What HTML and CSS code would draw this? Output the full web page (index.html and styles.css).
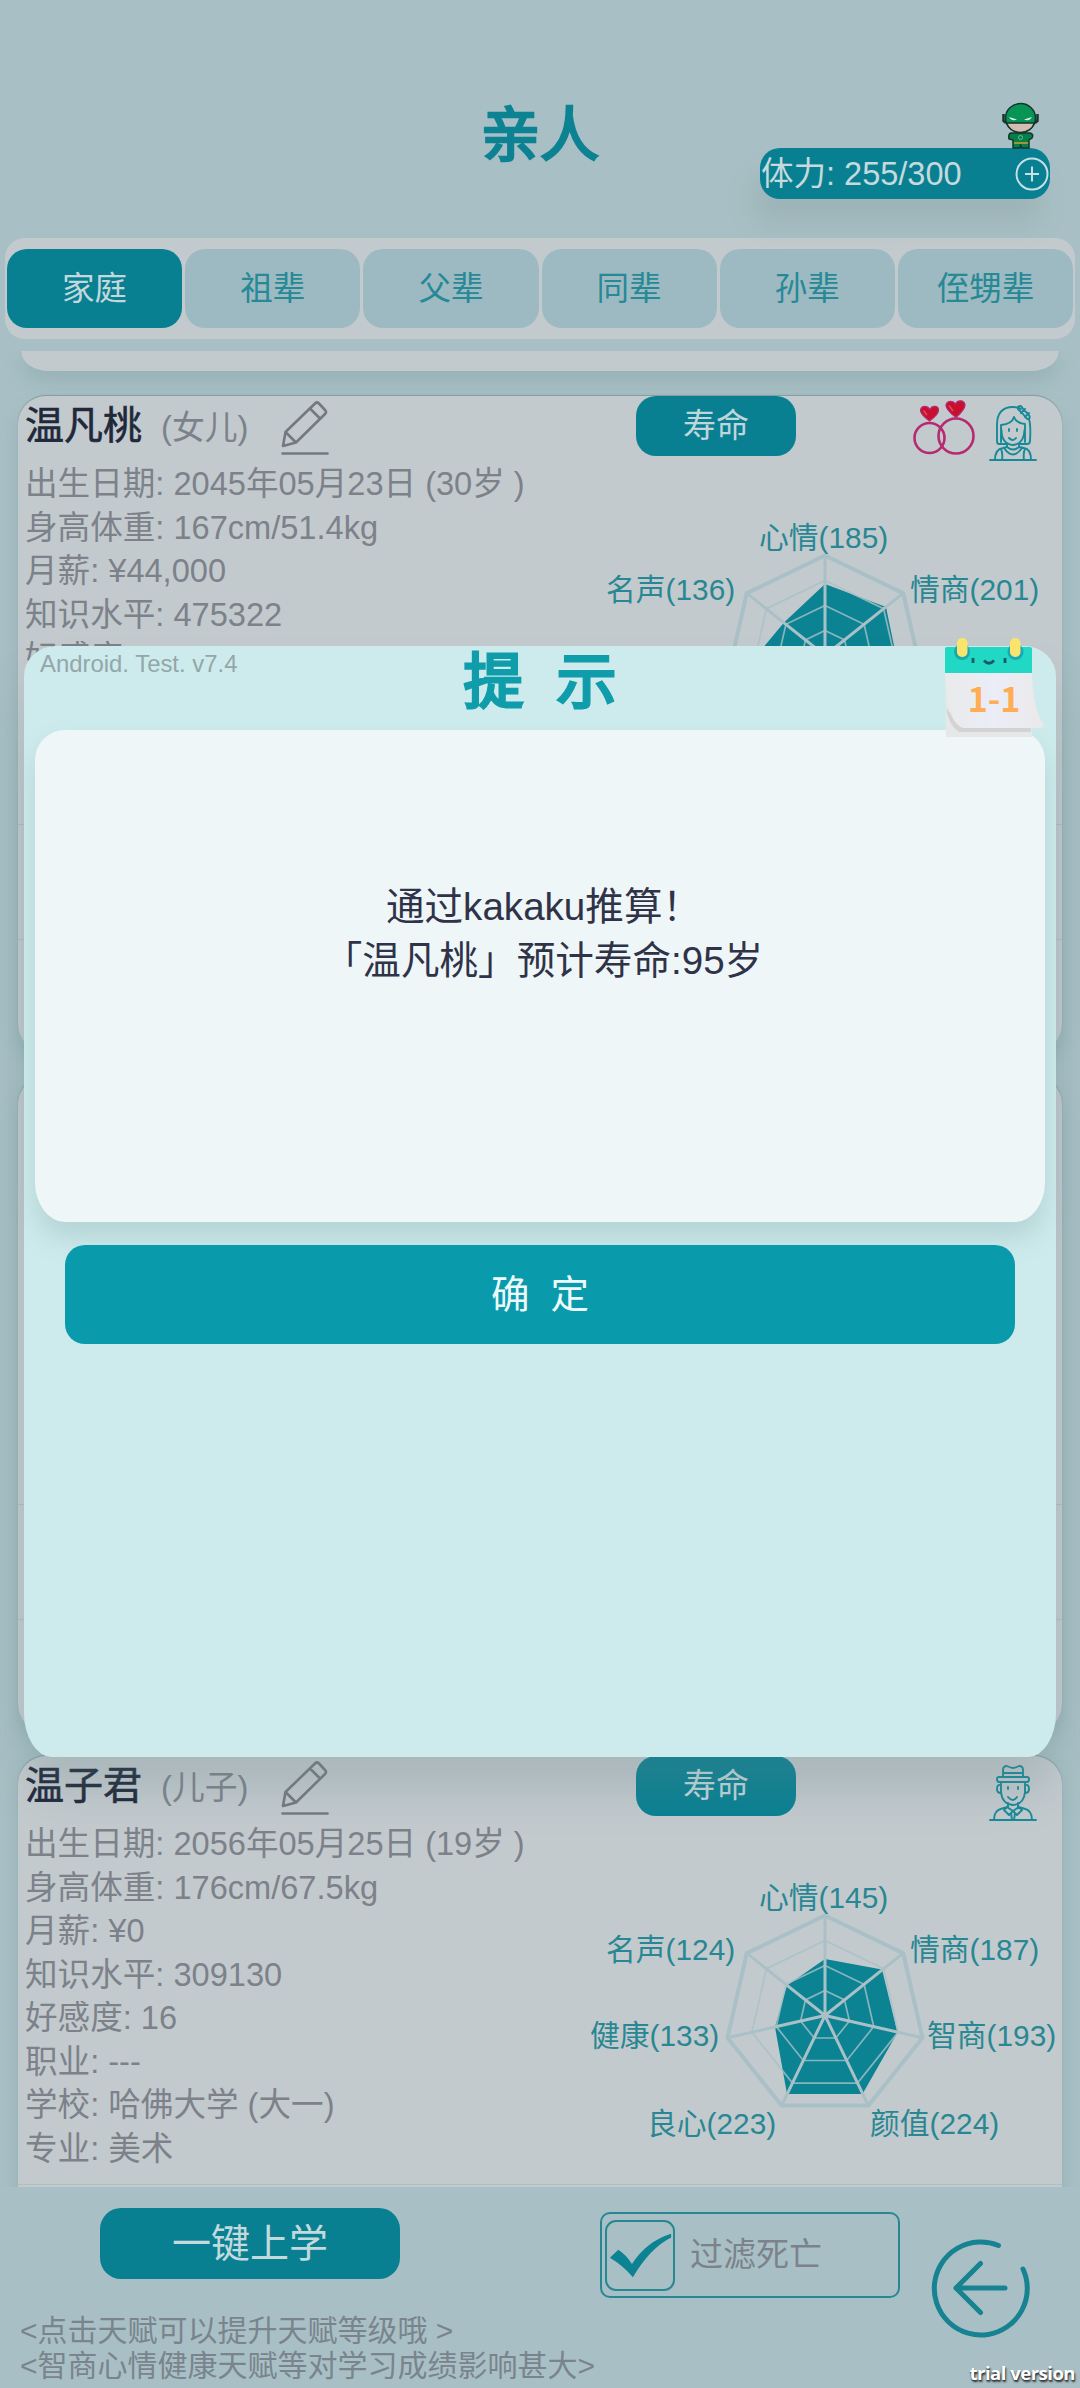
FILE: index.html
```html
<!DOCTYPE html>
<html lang="zh-CN">
<head>
<meta charset="utf-8">
<title>亲人</title>
<link rel="stylesheet" href="styles.css">
</head>
<body>
<svg class="defs" width="0" height="0">
  <defs>
    <symbol id="pencil" viewBox="0 0 48 56">
      <path d="M2 46 4.5 32 34 3.5Q36 1.500 38 3.500L44 10Q46 12 44 14L15 42.500Z M4.500 32 15 42.500 M29 8.500 39.500 19" fill="none" stroke="currentColor" stroke-width="2.600" stroke-linejoin="round"/>
      <path d="M1.500 53.500H46.500" stroke="currentColor" stroke-width="2.600" stroke-linecap="round"/>
    </symbol>
    <symbol id="web" viewBox="-110 -110 220 220">
      <g fill="none" stroke="#a8c0c6">
        <path stroke-width="4" d="M0-100 78.200-62.300 97.500 22.300 43.400 90.100-43.400 90.100-97.500 22.300-78.200-62.300Z"/>
        <path stroke-width="1.700" d="M0-75 58.600-46.800 73.100 16.700 32.500 67.600-32.500 67.600-73.100 16.700-58.600-46.800Z M0-50 39.100-31.200 48.700 11.100 21.700 45-21.700 45-48.700 11.100-39.100-31.200Z M0-25 19.500-15.600 24.400 5.600 10.800 22.500-10.800 22.500-24.400 5.600-19.500-15.600Z" opacity=".8"/>
        <path stroke-width="3" d="M0 0V-100M0 0 78.200-62.300M0 0 97.500 22.300M0 0 43.400 90.100M0 0-43.400 90.100M0 0-97.500 22.300M0 0-78.200-62.300"/>
      </g>
    </symbol>
  </defs>
</svg>
<main class="screen">
  <header class="header">
    <h1 class="title">亲人</h1>
    <div class="energy">
      <span>体力: 255/300</span>
      <svg class="plus" viewBox="0 0 34 34"><circle cx="17" cy="17" r="15.500"/><path d="M17 9.500V24.500M10 17H24"/></svg>
      <svg class="mascot" viewBox="0 0 37 47">
        <path d="M9 31Q6 32 7 37L11 38V46H18L18.500 43 20 46H27V38L30 36Q32 32 28 31Z" fill="#06804a" stroke="#16352b" stroke-width="1.500"/>
        <path d="M12 41H26" stroke="#b09a35" stroke-width="1.800"/>
        <circle cx="18.500" cy="35.500" r="2" fill="none" stroke="#6cba99"/>
        <path d="M1.500 12V19L4 21M35.500 12V19L33 21" fill="none" stroke="#16352b" stroke-width="2.500"/>
        <ellipse cx="18.500" cy="16" rx="15" ry="14.500" fill="#079455" stroke="#16352b" stroke-width="1.500"/>
        <path d="M4.500 21H32.500Q29 30 18.500 30.500 8 30 4.500 21Z" fill="#d2bdb3" stroke="#16352b" stroke-width="1.500"/>
        <path d="M7 15 15 17.500Q10 20 7 15ZM30 15 22 17.500Q27 20 30 15Z" fill="#e0eee5"/>
      </svg>
    </div>
  </header>

  <nav class="tabs">
    <a class="tab active">家庭</a>
    <a class="tab">祖辈</a>
    <a class="tab">父辈</a>
    <a class="tab">同辈</a>
    <a class="tab">孙辈</a>
    <a class="tab">侄甥辈</a>
  </nav>

  <section class="list">
    <article class="card tail"></article>

    <article class="card">
      <div class="main">
        <div class="head">
          <b class="name">温凡桃</b><span class="relation">(女儿)</span>
          <svg class="pencil"><use href="#pencil"/></svg>
          <button class="life">寿命</button>
          <svg class="rings" viewBox="0 0 62 56">
            <g fill="none" stroke="#b52a70" stroke-width="2.600"><circle cx="16.500" cy="38" r="15"/><circle cx="43" cy="36" r="17.500"/></g>
            <g fill="#c8102e" stroke="#b52a70" stroke-width="1.200">
              <path d="M16.500 21C10 16 7 13 7.500 10 8.500 5 14.500 5.500 17 9.500 19 5 25.500 5.500 25.500 10 25.500 14 22 17 16.500 21Z"/>
              <path d="M43 17.500C36 12 32.500 8 33 5 34 .5 40 0 42.500 4 44.500-.5 51 0 52 4.500 52.500 8.500 48 13 43 17.500Z"/>
            </g>
            <path d="M10.500 10.500 14 15M36 5.500 40 11" stroke="#dc4b61" stroke-width="1.500"/>
          </svg>
          <svg class="person" viewBox="0 0 48 56">
            <g fill="none" stroke="#178a98" stroke-width="1.900" stroke-linecap="round" stroke-linejoin="round">
              <path d="M1 55H47M6 55Q6 44 14 43L18 42V39M30 39V42L35 43Q42 44 42 55M12 44Q14 48 13 55M36 44Q34 48 35 55M15 43Q24 56 33 43M18 42Q24 47 30 42"/>
              <path d="M18 39H10Q8 39 8 36V20Q8 2 24 2 29 2 32 4M40 14Q42 20 41 36 41 39 38 39H30"/>
              <path d="M12 37V20Q23 19 25 12 27 18 36 19V37M12.500 25Q12.500 39 24 40 35 39 35.500 25"/>
              <path d="M29 4Q28 1 32 1L35 5 40 10Q42 14 38 14L34 9ZM32 8 36 4M36 12 40 8M20 33Q24 37 27 33M20 24V26M28 24V26"/>
            </g>
          </svg>
        </div>
        <div class="body">
          <ul class="info">
            <li>出生日期: 2045年05月23日 (30岁 )</li>
            <li>身高体重: 167cm/51.4kg</li>
            <li>月薪: ¥44,000</li>
            <li>知识水平: 475322</li>
            <li>好感度: 100</li>
          </ul>
          <svg class="radar" viewBox="-245 -154.500 482 290">
            <path class="value" d="M0-71.500 61-48.500 74.500 17 30 62-30 62-84 19-41-33Z"/>
            <use href="#web" x="-110" y="-110" width="220" height="220"/>
            <g class="labels">
              <text x="-66" y="-108">心情(185)</text>
              <text x="-219" y="-56">名声(136)</text>
              <text x="85" y="-56">情商(201)</text>
            </g>
          </svg>
        </div>
      </div>
      <div class="strip"></div>
    </article>

    <article class="card">
      <div class="main"></div>
      <div class="strip"></div>
    </article>

    <article class="card">
      <div class="main">
        <div class="head">
          <b class="name">温子君</b><span class="relation">(儿子)</span>
          <svg class="pencil"><use href="#pencil"/></svg>
          <button class="life">寿命</button>
          <svg class="person alone" viewBox="0 0 48 56">
            <g fill="none" stroke="#178a98" stroke-width="1.900" stroke-linecap="round" stroke-linejoin="round">
              <path d="M1 55H47M5 55Q5 45 13 43.500L19 42V38M43 55Q43 45 35 43.500L29 42V38"/>
              <path d="M14 12V5Q14 1 18 1 22 3 24 3 26 3 30 1 34 1 34 5V12M14 8H34M10 12H38Q40 12 40 14 40 17 38 17H10Q8 17 8 14 8 12 10 12Z"/>
              <path d="M12 18V27Q13 39 24 40 35 39 36 27V18M12 20Q8 19 8 24 8 28 12 28M36 20Q40 19 40 24 40 28 36 28"/>
              <path d="M18 42 24 46 30 42 33 45 28 50 24 46 20 50 15 45ZM22 48 23 55M26 48 25 55M19 32Q24 38 28 32M19 22V24M29 22V24"/>
            </g>
          </svg>
        </div>
        <div class="body">
          <ul class="info">
            <li>出生日期: 2056年05月25日 (19岁 )</li>
            <li>身高体重: 176cm/67.5kg</li>
            <li>月薪: ¥0</li>
            <li>知识水平: 309130</li>
            <li>好感度: 16</li>
            <li>职业: ---</li>
            <li>学校: 哈佛大学 (大一)</li>
            <li>专业: 美术</li>
          </ul>
          <svg class="radar" viewBox="-245 -154.500 482 290">
            <path class="value" d="M0-56.500 57-46 72.500 17 37.500 78.500-38 78.500-50 11.500-38-30Z"/>
            <use href="#web" x="-110" y="-110" width="220" height="220"/>
            <g class="labels">
              <text x="-66" y="-108">心情(145)</text>
              <text x="-219" y="-56">名声(124)</text>
              <text x="85" y="-56">情商(187)</text>
              <text x="-235" y="30">健康(133)</text>
              <text x="102" y="30">智商(193)</text>
              <text x="-178" y="118">良心(223)</text>
              <text x="45" y="118">颜值(224)</text>
            </g>
          </svg>
        </div>
      </div>
      <div class="strip"></div>
    </article>
  </section>

  <footer class="footer">
    <div class="left">
      <button class="school">一键上学</button>
      <p class="tips">&lt;点击天赋可以提升天赋等级哦 &gt;<br>&lt;智商心情健康天赋等对学习成绩影响甚大&gt;</p>
    </div>
    <div class="filter">
      <svg class="check" viewBox="0 0 70 70"><path d="M3 37.500 12 29Q20 34 26.500 44 42 20 68 12V16Q46 27 27.500 58 16 45 3 37.500Z"/></svg>
      <span>过滤死亡</span>
    </div>
    <svg class="back" viewBox="0 0 100 100">
      <path d="M68.500 7.500A46.500 46.500 0 1 0 93 31M75 50H26M50.500 25.500 26 50 50.500 74.500"/>
    </svg>
    <span class="trial">trial version</span>
  </footer>

  <section class="dialog">
    <div class="dialog-head">
      <span class="version">Android. Test. v7.4</span>
      <h2 class="dialog-title"><span>提</span><span>示</span></h2>
      <div class="calendar">
        <svg viewBox="0 0 100 100">
          <defs><linearGradient id="paper" x2="1"><stop offset="0" stop-color="#e8eaeb"/><stop offset=".5" stop-color="#ebedf7"/><stop offset="1" stop-color="#eae9ea"/></linearGradient></defs>
          <path d="M0 36H87V99H1Z" fill="#e5e7e8"/>
          <path d="M1 70Q4 88 14 94H86V90H18Z" fill="#d3d3d4"/>
          <path d="M0 35H87Q88 72 99 87 98 90 94 90H19Q4 87 1 50Z" fill="url(#paper)"/>
          <path d="M0 11Q0 9 2 9H85Q87 9 87 11V35H0Z" fill="#20d8c3"/>
          <circle cx="17" cy="14" r="8" fill="#18a9b4"/><circle cx="70.500" cy="14" r="8" fill="#18a9b4"/>
          <rect x="12" y="0" width="10.500" height="19" rx="5" fill="#fae46b"/><rect x="65" y="0" width="10.500" height="19" rx="5" fill="#fae46b"/>
          <path d="M28 20V25M60 20V25M39 22.500Q44 28 49 22.500" fill="none" stroke="#195a64" stroke-width="2.800"/>
        </svg>
        <b>1-1</b>
      </div>
    </div>
    <div class="message">通过kakaku推算！<br>「温凡桃」预计寿命:95岁</div>
    <button class="confirm"><span>确</span><span>定</span></button>
  </section>
</main>
</body>
</html>
```
FILE: styles.css
```css
* { box-sizing: border-box; }
body {
  margin: 0;
  font-family: "Liberation Sans", "Noto Sans CJK SC", sans-serif;
}
h1, h2, p, ul { margin: 0; padding: 0; }
ul { list-style: none; }
button { border: 0; padding: 0; font: inherit; }
.defs { position: absolute; }

.screen {
  position: relative;
  display: flex;
  flex-direction: column;
  width: 1080px;
  height: 2388px;
  overflow: hidden;
  background: #a8c0c5;
}

/* header */
.header {
  display: grid;
  grid-template-columns: 1fr auto 1fr;
  flex: none;
  height: 238px;
  padding: 104px 30px 0;
}
.title {
  grid-column: 2;
  height: 60px;
  margin-top: 2px;
  line-height: 60px;
  font-size: 59px;
  font-weight: 400;
  color: #0d8292;
  -webkit-text-stroke: 2.6px #0d8292;
  stroke-linejoin: round;
}
.energy {
  position: relative;
  justify-self: end;
  display: flex;
  align-items: center;
  justify-content: space-between;
  width: 290px;
  height: 51px;
  margin-top: 44px;
  padding: 0 1px;
  border-radius: 20px;
  background: #098092;
  box-shadow: -8px 26px 26px rgba(110, 130, 130, .18);
  color: #c6d9dd;
  font-size: 32.5px;
  line-height: 48px;
}
.plus {
  width: 34px;
  height: 34px;
  fill: none;
  stroke: #c6e0e4;
  stroke-width: 2;
}
.mascot {
  position: absolute;
  right: 11px;
  top: -46px;
  width: 37px;
  height: 47px;
}

/* tabs */
.tabs {
  display: flex;
  flex: none;
  gap: 3px;
  height: 101px;
  margin: 0 5px;
  padding: 11px 2px;
  border-radius: 20px;
  background: #c3cace;
}
.tab {
  flex: 1;
  border-radius: 20px;
  background: #9dbac2;
  color: #268996;
  font-size: 32.5px;
  line-height: 81px;
  text-align: center;
}
.tab.active { background: #098092; color: #c3d8dc; }

/* people list */
.list {
  flex: none;
  height: 1836px;
  margin-top: 12px;
  padding: 0 18px;
  overflow: hidden;
}
.card {
  height: 656px;
  margin-bottom: 24px;
  border-radius: 28px;
  background: #c3cace;
  box-shadow: 0 10px 16px 2px rgba(100, 135, 140, .22), 0 -1px 1px rgba(100, 120, 125, .5);
}
.card.tail {
  height: 20px;
  margin: 0 3px 25px;
  border-radius: 0 0 28px 28px / 0 0 20px 20px;
}
.main { height: 429px; border-bottom: 1px solid #b2bdc1; }
.strip { height: 115px; border-bottom: 1px solid #b2bdc1; }
.head {
  display: flex;
  align-items: flex-start;
  height: 60px;
  padding: 0 25px 0 7px;
}
.name {
  width: 117px;
  font-size: 39px;
  font-weight: 400;
  line-height: 60px;
  color: #20283a;
  -webkit-text-stroke: .6px #20283a;
  white-space: nowrap;
}
.relation {
  width: 90px;
  margin-left: 19px;
  font-size: 32.8px;
  line-height: 64px;
  color: #7c828b;
}
.pencil {
  width: 48px;
  height: 56px;
  margin: 4px 0 0 30px;
  color: #747981;
}
.life {
  width: 160px;
  height: 60px;
  margin-left: 307px;
  border-radius: 20px;
  background: #098092;
  color: #c0d6da;
  font-size: 33px;
  line-height: 60px;
}
.rings { width: 62px; height: 56px; margin: 4px 14px 0 auto; }
.person { width: 48px; height: 56px; margin-top: 9px; }
.person.alone { margin-left: auto; }
.body { display: flex; }
.info {
  flex: 1;
  padding: 6px 0 0 7px;
  color: #7c818a;
  font-size: 32.6px;
  line-height: 43.5px;
  white-space: nowrap;
}
.radar { flex: none; width: 482px; height: 290px; margin-top: 45px; }
.value { fill: #0c8393; }
.labels { fill: #298793; font-size: 29.8px; }

/* footer */
.footer {
  position: relative;
  display: flex;
  flex: 1;
}
.left { width: 600px; padding: 21px 0 0 20px; }
.school {
  display: block;
  width: 300px;
  height: 71px;
  margin-left: 80px;
  border-radius: 21px;
  background: #098092;
  color: #c3dadd;
  font-size: 39px;
  line-height: 70px;
}
.tips {
  margin-top: 35px;
  color: #7a848d;
  font-size: 30px;
  line-height: 34.5px;
  white-space: nowrap;
}
.filter {
  display: flex;
  align-items: center;
  gap: 15px;
  width: 300px;
  height: 86px;
  margin-top: 25px;
  padding-left: 3px;
  border: 2px solid #298793;
  border-radius: 10px;
  color: #7c828b;
  font-size: 33px;
  line-height: 60px;
}
.check {
  width: 70px;
  height: 71px;
  border: 2px solid #298793;
  border-radius: 11px;
  fill: #0c8393;
}
.back {
  width: 100px;
  height: 100px;
  margin: 51px 0 0 30px;
  fill: none;
  stroke: #178291;
  stroke-width: 5;
  stroke-linecap: round;
  stroke-linejoin: round;
}
.trial {
  position: absolute;
  right: 5px;
  bottom: 3px;
  color: #fff;
  font: 700 18.5px/24px "Open Sans", sans-serif;
  letter-spacing: -.5px;
  text-shadow: 1px 2px 2px #333, 0 1px 1px #555;
}

/* dialog */
.dialog {
  position: absolute;
  left: 24px;
  top: 646px;
  display: flex;
  flex-direction: column;
  width: 1032px;
  height: 1111px;
  padding: 0 11px;
  border-radius: 32px 32px 28px 28px / 30px 30px 44px 44px;
  background: #cdebec;
  box-shadow: 0 34px 40px rgba(100, 130, 135, .25);
}
.dialog-head {
  position: relative;
  flex: none;
  height: 84px;
}
.version {
  position: absolute;
  left: 5px;
  top: 4px;
  color: #93a6a9;
  font-size: 23.9px;
  line-height: 28px;
}
.dialog-title {
  display: flex;
  justify-content: center;
  gap: 33px;
  color: #109dab;
  font-size: 60px;
  font-weight: 400;
  line-height: 74px;
  -webkit-text-stroke: 3px #109dab;
}
.calendar {
  position: absolute;
  left: 910px;
  top: -8px;
  width: 100px;
  height: 100px;
}
.calendar svg { display: block; width: 100px; height: 100px; }
.calendar b {
  position: absolute;
  left: 0;
  top: 36px;
  width: 98px;
  text-align: center;
  color: #ffad55;
  font: 700 34px/48px "Noto Sans CJK SC", sans-serif;
}
.message {
  flex: none;
  height: 492px;
  padding: 150px 0 0 7px;
  border-radius: 30px 30px 30px 30px / 30px 30px 40px 40px;
  background: #eef6f8;
  box-shadow: 0 16px 26px rgba(130, 160, 160, .3);
  color: #303348;
  font-size: 38.6px;
  line-height: 54px;
  text-align: center;
}
.confirm {
  display: flex;
  flex: none;
  align-items: center;
  justify-content: center;
  gap: 21px;
  position: relative;
  height: 99px;
  margin: 23px 30px 0;
  border-radius: 20px;
  background: #099bac;
  color: #eefafa;
  font-size: 38.5px;
  line-height: 50px;
}
```
